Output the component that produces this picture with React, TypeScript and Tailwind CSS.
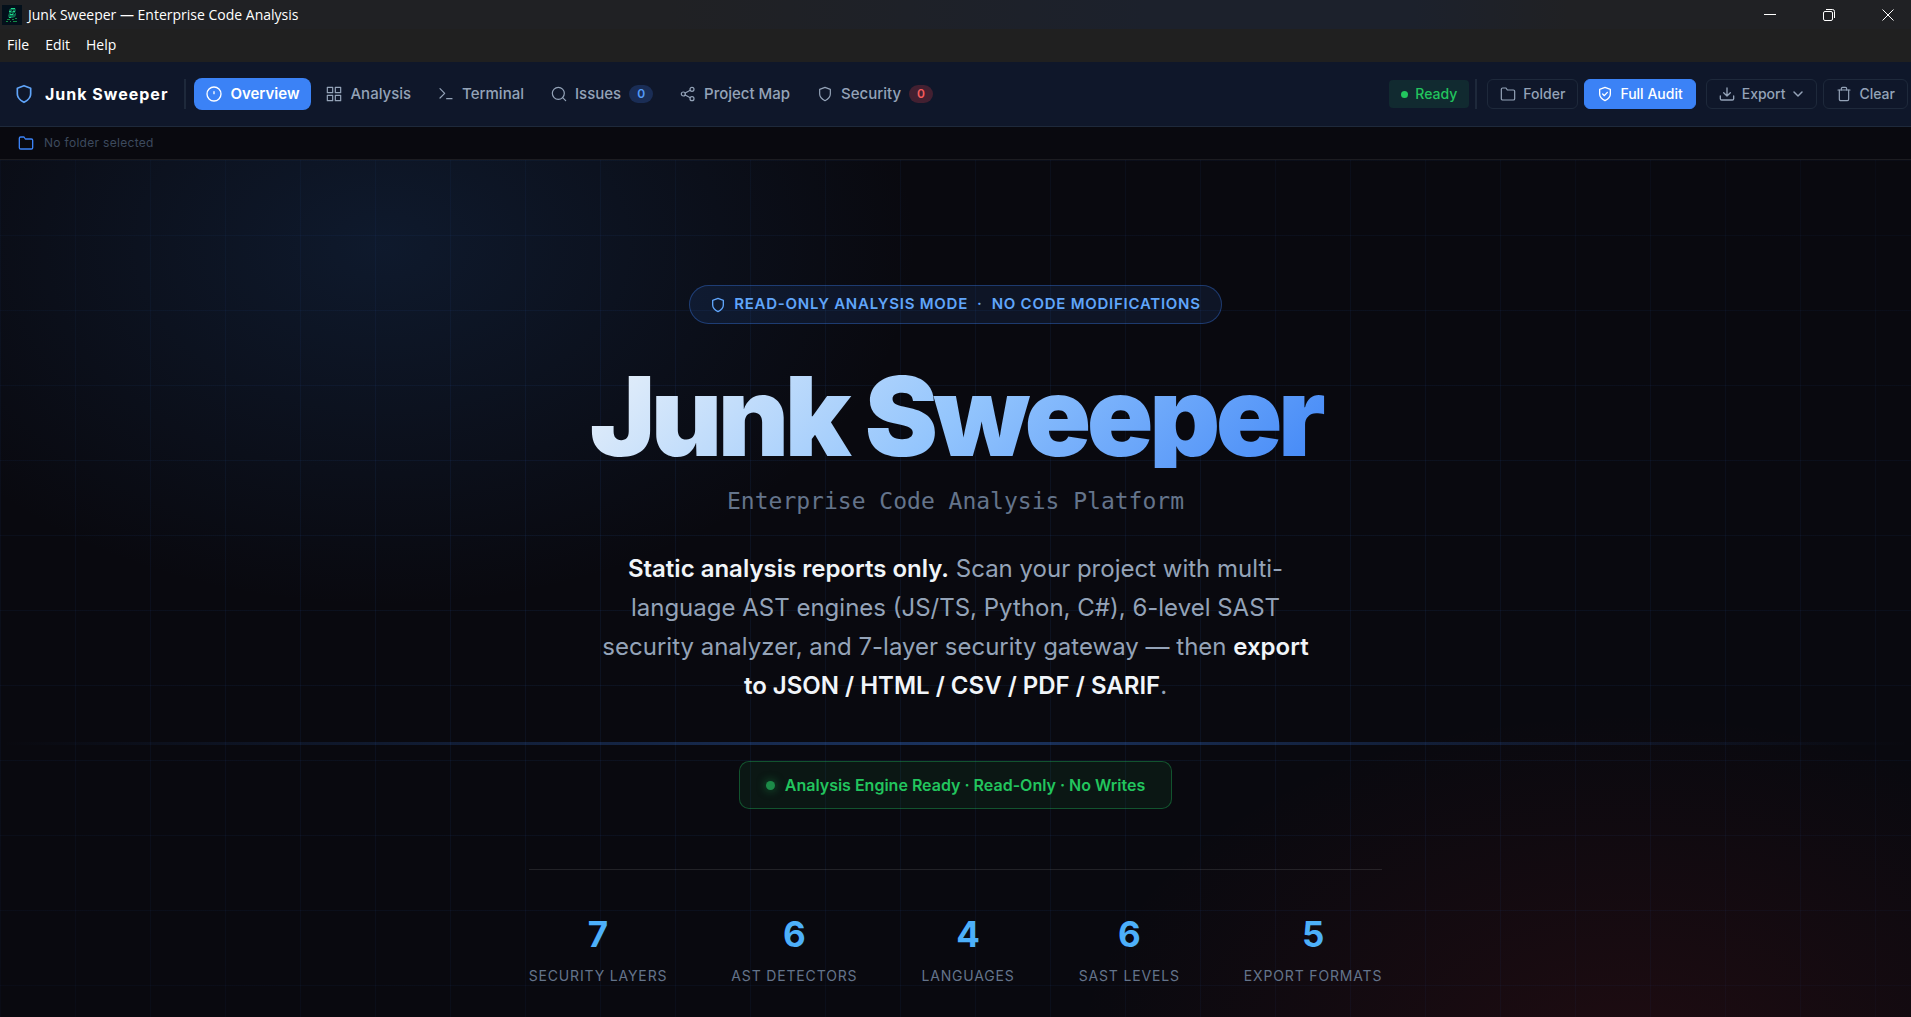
import type { ReactNode } from 'react';

/**
 * Icon paths, all on a 24x24 grid
 */
const ICONS = {
  shield: <path d="M12 22s8-4 8-10V5l-8-3-8 3v7c0 6 8 10 8 10z" />,
  shieldCheck: (
    <>
      <path d="M12 22s8-4 8-10V5l-8-3-8 3v7c0 6 8 10 8 10z" />
      <path d="M8.5 12l2.5 2.5 4.5-5" />
    </>
  ),
  overview: (
    <>
      <circle cx="12" cy="12" r="10.5" />
      <path d="M12 8.5v3" />
    </>
  ),
  grid: (
    <>
      <rect x="2" y="2" width="8" height="8" />
      <rect x="14" y="2" width="8" height="8" />
      <rect x="2" y="14" width="8" height="8" />
      <rect x="14" y="14" width="8" height="8" />
    </>
  ),
  terminal: (
    <>
      <path d="M3 18l7-7-7-7" />
      <path d="M13 19h8" />
    </>
  ),
  search: (
    <>
      <circle cx="11" cy="11" r="9" />
      <path d="M22 22l-4.5-4.5" />
    </>
  ),
  share: (
    <>
      <circle cx="18" cy="5" r="3" />
      <circle cx="5" cy="12" r="3" />
      <circle cx="18" cy="19" r="3" />
      <path d="M7.7 13.5l7.7 4M15.4 6.5l-7.7 4" />
    </>
  ),
  folder: <path d="M22 19a2 2 0 0 1-2 2H4a2 2 0 0 1-2-2V5a2 2 0 0 1 2-2h5l2 3h9a2 2 0 0 1 2 2z" />,
  download: (
    <>
      <path d="M22 15v4a2 2 0 0 1-2 2H4a2 2 0 0 1-2-2v-4" />
      <path d="M7 10l5 5 5-5M12 15V3" />
    </>
  ),
  chevron: <path d="M4 8l8 8 8-8" />,
  trash: (
    <>
      <path d="M3 6h18" />
      <path d="M19 6v14a2 2 0 0 1-2 2H7a2 2 0 0 1-2-2V6M8 6V4a2 2 0 0 1 2-2h4a2 2 0 0 1 2 2v2" />
    </>
  ),
};

type IconName = keyof typeof ICONS;

function Icon({ name, className, stroke = 2 }: { name: IconName; className: string; stroke?: number }) {
  return (
    <svg
      viewBox="0 0 24 24"
      fill="none"
      stroke="currentColor"
      strokeWidth={stroke}
      strokeLinecap="round"
      strokeLinejoin="round"
      className={`shrink-0 ${className}`}
      aria-hidden="true"
    >
      {ICONS[name]}
    </svg>
  );
}

const TABS: { icon: IconName; label: string; count?: number; tone?: string }[] = [
  { icon: 'overview', label: 'Overview' },
  { icon: 'grid', label: 'Analysis' },
  { icon: 'terminal', label: 'Terminal' },
  { icon: 'search', label: 'Issues', count: 0, tone: 'bg-[#1a2d55] text-[#549bf8]' },
  { icon: 'share', label: 'Project Map' },
  { icon: 'shield', label: 'Security', count: 0, tone: 'bg-[#432031] text-[#f55b5b]' },
];

const STATS = [
  { value: 7, label: 'Security Layers' },
  { value: 6, label: 'AST Detectors' },
  { value: 4, label: 'Languages' },
  { value: 6, label: 'SAST Levels' },
  { value: 5, label: 'Export Formats' },
];

function AppLogo() {
  return (
    <svg viewBox="0 0 20 20" className="h-5 w-5 shrink-0" aria-hidden="true">
      <rect width="20" height="20" fill="#03101b" />
      <path d="M7 5l2-2h4l1 2-1 3h1v2l-1 2-3 1H7l-1-2 1-3z" fill="#0b6b4c" />
      <path d="M9 3.5h4M7 6.5h2M11 6.5h2M8 9.5h3M7 12.5h2" stroke="#1fd68c" strokeWidth="1" />
      <path d="M10 5.5h1M9 8.5h1M12 8.5h1" stroke="#03101b" strokeWidth="1" />
      <path d="M5 14.5h3M10 14.5h2M13 13.5h2M4 16.5h2M8 16.5h1M11 16.5h4" stroke="#128a44" strokeWidth="1" />
    </svg>
  );
}

function TitleBar() {
  return (
    <div className="flex h-[29px] items-center justify-between bg-[linear-gradient(90deg,#202124_0%,#202124_35%,#1c212c_60%,#1c212c_74%,#202124_82%)] pr-4 pl-0.5 font-['Open_Sans',sans-serif] text-sm text-white">
      <div className="flex items-center gap-1.5">
        <AppLogo />
        <span>Junk Sweeper — Enterprise Code Analysis</span>
      </div>
      <div className="flex items-center gap-[45px]">
        <button type="button" aria-label="Minimize">
          <svg viewBox="0 0 14 14" className="h-3.5 w-3.5" stroke="white" fill="none">
            <path d="M1 6.5h12" />
          </svg>
        </button>
        <button type="button" aria-label="Restore">
          <svg viewBox="0 0 14 14" className="h-3.5 w-3.5" stroke="white" fill="none">
            <rect x="1.5" y="3.5" width="9" height="9" rx="1.5" />
            <path d="M4 1.5h6.5a2 2 0 0 1 2 2V10" />
          </svg>
        </button>
        <button type="button" aria-label="Close">
          <svg viewBox="0 0 14 14" className="h-3.5 w-3.5" stroke="white" fill="none">
            <path d="M1.5 1.5l11 11M12.5 1.5l-11 11" />
          </svg>
        </button>
      </div>
    </div>
  );
}

function MenuBar() {
  return (
    <div className="flex h-[33px] items-center gap-4 bg-[#202020] px-[7px] pb-0.5 font-['Open_Sans',sans-serif] text-sm text-white">
      <button type="button">File</button>
      <button type="button">Edit</button>
      <button type="button">Help</button>
    </div>
  );
}

function Divider() {
  return <span className="h-[30px] w-0.5 bg-[#1e293b]" />;
}

function ToolButton({ children, primary = false }: { children: ReactNode; primary?: boolean }) {
  return (
    <button
      type="button"
      className={`flex h-[30px] items-center gap-[7px] rounded-md border px-3 text-sm font-medium ${
        primary ? 'border-[#3b82f6] bg-[#3b82f6] text-white' : 'border-[#1e293b] text-[#94a3b8]'
      }`}
    >
      {children}
    </button>
  );
}

function NavBar() {
  return (
    <header className="flex h-[65px] items-center justify-between border-b border-[#1e293b] bg-[#0f172a] pr-[3px] pl-3.5">
      <div className="flex items-center gap-2">
        <div className="flex items-center gap-[11px] pr-2">
          <Icon name="shield" className="h-5 w-5 text-[#60a5fa]" />
          <span className="text-base font-bold tracking-[1px] text-white">Junk Sweeper</span>
        </div>
        <Divider />
        <nav className="flex items-center gap-[3px]">
          {TABS.map((tab, i) => (
            <button
              key={tab.label}
              type="button"
              className={`flex h-8 items-center gap-2 rounded-lg px-3 text-[15px] ${
                i === 0 ? 'bg-[#3b82f6] font-semibold text-white' : 'font-medium text-[#94a3b8]'
              }`}
            >
              <Icon name={tab.icon} className="h-4 w-4" stroke={i === 0 ? 2 : 1.8} />
              {tab.label}
              {tab.count !== undefined && (
                <span className={`rounded-full px-2 text-xs leading-[18px] font-semibold ${tab.tone}`}>
                  {tab.count}
                </span>
              )}
            </button>
          ))}
        </nav>
      </div>

      <div className="flex items-center gap-1.5">
        <span className="flex h-7 items-center gap-[7px] rounded bg-[#112a30] px-3 text-sm font-medium text-[#22c55e]">
          <span className="h-[7px] w-[7px] rounded-full bg-[#22c55e]" />
          Ready
        </span>
        <Divider />
        <div className="flex items-center gap-1.5 pl-1">
          <ToolButton>
            <Icon name="folder" className="h-4 w-4" stroke={1.8} />
            Folder
          </ToolButton>
          <ToolButton primary>
            <Icon name="shieldCheck" className="h-4 w-4" />
            Full Audit
          </ToolButton>
        </div>
        <div className="flex items-center gap-1.5 pl-1">
          <ToolButton>
            <Icon name="download" className="h-4 w-4" />
            Export
            <Icon name="chevron" className="h-3 w-3" stroke={3} />
          </ToolButton>
          <ToolButton>
            <Icon name="trash" className="h-4 w-4" stroke={1.8} />
            Clear
          </ToolButton>
        </div>
      </div>
    </header>
  );
}

function Hero() {
  return (
    <main className="relative flex flex-1 flex-col items-center overflow-hidden bg-[#09090f] bg-[radial-gradient(ellipse_40%_60%_at_20%_10%,rgba(34,84,150,0.22),transparent_70%),radial-gradient(ellipse_34%_48%_at_85%_105%,rgba(220,38,38,0.1),transparent_85%)] px-8 pt-[125px] pb-8">
      {/* Background grid */}
      <div className="pointer-events-none absolute inset-0 [mask-image:radial-gradient(ellipse_at_center,black_30%,rgba(0,0,0,0.4)_100%)] bg-[linear-gradient(rgba(59,130,246,0.08)_1px,transparent_1px),linear-gradient(90deg,rgba(59,130,246,0.08)_1px,transparent_1px)] bg-[size:75px_75px]" />
      {/* Scan line */}
      <div className="pointer-events-none absolute inset-x-0 top-[582px] h-[3px] bg-[linear-gradient(90deg,transparent,rgba(59,130,246,0.35),transparent)]" />

      <p className="relative flex h-[39px] items-center gap-2 rounded-full border border-[#3b82f6]/35 bg-[#3b82f6]/10 px-5 text-[15px] font-semibold tracking-wider text-[#60a5fa] uppercase">
        <Icon name="shield" className="h-4 w-4" />
        <span className="whitespace-pre">Read-Only Analysis Mode  ·  No Code Modifications</span>
      </p>

      <h1 className="relative mt-10 bg-[linear-gradient(135deg,#f1f5f9_0%,#93c5fd_50%,#3b82f6_100%)] bg-clip-text px-10 text-[110px] leading-[104px] font-black tracking-[-0.04em] text-transparent">
        Junk Sweeper
      </h1>

      <p className="relative mt-[19px] font-['DejaVu_Sans_Mono',monospace] text-[23px] leading-[28px] text-[#64748b]">
        Enterprise Code Analysis Platform
      </p>

      <p className="relative mt-[34px] w-[725px] text-center text-2xl leading-[39px] text-[#94a3b8]">
        <strong className="font-semibold text-[#f1f5f9]">Static analysis reports only.</strong> Scan your project
        with multi-language AST engines (JS/TS, Python, C#), 6-level SAST security analyzer, and 7-layer security
        gateway — then <strong className="font-semibold text-[#f1f5f9]">export to JSON / HTML / CSV / PDF / SARIF</strong>.
      </p>

      <p className="relative mt-14 flex h-12 items-center gap-2.5 rounded-[10px] border border-[#22c55e]/35 bg-[#22c55e]/8 px-[26px] text-base font-semibold text-[#22c55e]">
        <span className="h-[9px] w-[9px] rounded-full bg-[#1c8b48] shadow-[0_0_10px_#22c55e80]" />
        Analysis Engine Ready · Read-Only · No Writes
      </p>

      <dl className="relative mt-[60px] flex gap-16 border-t border-white/10 pt-11">
        {STATS.map((stat) => (
          <div key={stat.label} className="flex flex-col-reverse items-center gap-3">
            <dt className="text-sm leading-5 tracking-[0.06em] text-[#64748b] uppercase">{stat.label}</dt>
            <dd className="text-[35px] leading-10 font-bold text-[#4db0fa]">{stat.value}</dd>
          </div>
        ))}
      </dl>
    </main>
  );
}

export default function App() {
  return (
    <div className="flex min-h-screen flex-col bg-[#09090f] font-['Inter',sans-serif]">
      <TitleBar />
      <MenuBar />
      <NavBar />
      {/* Selected folder */}
      <div className="flex h-[33px] items-center gap-2.5 border-b border-white/8 px-[18px] text-xs tracking-wide text-[#3d4a5e]">
        <Icon name="folder" className="h-4 w-4 text-[#3b82f6]" />
        No folder selected
      </div>
      <Hero />
    </div>
  );
}
